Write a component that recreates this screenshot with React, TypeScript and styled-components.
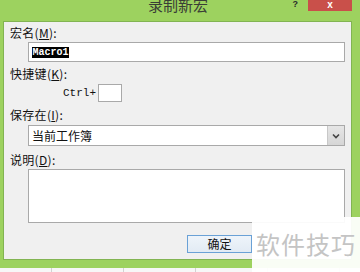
import React from "react";
import styled, { createGlobalStyle } from "styled-components";

const Global = createGlobalStyle`
  html, body { margin: 0; padding: 0; background: #f5f5f5; }
  body { font-family: "Noto Sans CJK SC", "Noto Sans", sans-serif; }
  * { box-sizing: border-box; }
`;

const Screen = styled.div`
  position: relative;
  width: 360px;
  height: 272px;
  overflow: hidden;
  display: flex;
  flex-direction: column;
`;

const Window = styled.div`
  height: 268px;
  background: #9dd25f;
  display: flex;
  flex-direction: column;
  padding: 0 8px 8px 3px;
`;

const TitleBar = styled.div`
  height: 21px;
  display: flex;
  align-items: flex-start;
  margin-right: -8px;
`;

const TitleText = styled.div`
  margin-left: 145px;
  margin-top: -3px;
  font-family: "Noto Sans CJK SC", sans-serif;
  font-size: 15px;
  line-height: 16px;
  color: #3a3d36;
`;

const Spacer = styled.div`
  flex: 1;
`;

const Help = styled.div`
  margin-top: 0px;
  margin-right: 10px;
  font-family: "Liberation Sans", sans-serif;
  font-weight: bold;
  font-size: 9px;
  line-height: 9px;
  color: #2b2b2b;
`;

const Close = styled.div`
  width: 44px;
  height: 11px;
  margin-right: 8px;
  background: #c9504a;
  color: #fff;
  display: flex;
  justify-content: center;
  align-items: flex-start;
  font-family: "Liberation Sans", sans-serif;
  font-weight: bold;
  font-size: 10px;
  line-height: 9px;
`;

const Panel = styled.div`
  flex: 1;
  background: #f0f0f0;
  border: 1px solid #82b452;
  display: flex;
  flex-direction: column;
  padding: 4px 6px 0 6px;
`;

const Label = styled.div`
  font-size: 12px;
  line-height: 14px;
  color: #111;
  white-space: nowrap;
  letter-spacing: 0.3px;
`;

const Field = styled.div<{ $h: number; $mt: number }>`
  margin-left: 18px;
  margin-top: ${(p) => p.$mt}px;
  height: ${(p) => p.$h}px;
  background: #fff;
  border: 1px solid #a9a9a9;
  display: flex;
  align-items: center;
  padding-left: 3px;
`;

const Selected = styled.span`
  background: #000;
  color: #fff;
  font-family: "Liberation Mono", monospace;
  font-size: 10px;
  line-height: 11px;
  padding: 0 0.5px;
  font-weight: bold;
`;

const Spaced = styled.div<{ $mt: number }>`
  margin-top: ${(p) => p.$mt}px;
`;

const ShortcutRow = styled.div`
  margin-top: 3px;
  margin-left: 53px;
  display: flex;
  align-items: center;
  gap: 2px;
  height: 18px;
`;

const Mono = styled.span`
  font-family: "Liberation Mono", monospace;
  font-size: 11px;
  color: #111;
`;

const KeyBox = styled.div`
  width: 24px;
  height: 18px;
  background: #fff;
  border: 1px solid #a9a9a9;
`;

const SelectText = styled.span`
  flex: 1;
  font-size: 12px;
  color: #111;
`;

const DropButton = styled.div`
  width: 17px;
  height: 100%;
  background: linear-gradient(#e6e6e6, #d6d6d6);
  border-left: 1px solid #c8c8c8;
  display: flex;
  align-items: center;
  justify-content: center;
`;

const ButtonRow = styled.div`
  margin-top: 12px;
  display: flex;
  padding-left: 177px;
`;

const Button = styled.div`
  width: 65px;
  height: 18px;
  border: 1px solid #6aa1d6;
  background: linear-gradient(#eef4fa, #e2ebf4);
  display: flex;
  align-items: center;
  justify-content: center;
  font-size: 12px;
  line-height: 14px;
  color: #111;
`;

const Sheet = styled.div`
  flex: 1;
  display: grid;
  grid-template-columns: 52px repeat(5, 72px);
  background: #f7f7f7;
`;

const Cell = styled.div`
  border-right: 1px solid #d2d2d2;
`;

const Watermark = styled.div`
  position: absolute;
  left: 252px;
  top: 217px;
  width: 108px;
  height: 55px;
  background: rgba(255, 255, 255, 0.94);
  display: flex;
  align-items: center;
  justify-content: center;
  font-family: "Noto Sans CJK SC", sans-serif;
  font-size: 24px;
  color: #c4c4c4;
  letter-spacing: 1px;
  padding-bottom: 2px;
`;

export default function App() {
  return (
    <>
      <Global />
      <Screen>
        <Window>
          <TitleBar>
            <TitleText>录制新宏</TitleText>
            <Spacer />
            <Help>?</Help>
            <Close>x</Close>
          </TitleBar>
          <Panel>
            <Label>宏名(<u>M</u>):</Label>
            <Field $h={20} $mt={2}>
              <Selected>Macro1</Selected>
            </Field>
            <Spaced $mt={5}>
              <Label>快捷键(<u>K</u>):</Label>
            </Spaced>
            <ShortcutRow>
              <Mono>Ctrl+</Mono>
              <KeyBox />
            </ShortcutRow>
            <Spaced $mt={6}>
              <Label>保存在(<u>I</u>):</Label>
            </Spaced>
            <Field $h={21} $mt={3}>
              <SelectText>当前工作簿</SelectText>
              <DropButton>
                <svg width="8" height="6" viewBox="0 0 8 6">
                  <path d="M1 1.5 L4 4.5 L7 1.5" fill="none" stroke="#444" strokeWidth="1.6" />
                </svg>
              </DropButton>
            </Field>
            <Spaced $mt={7}>
              <Label>说明(<u>D</u>):</Label>
            </Spaced>
            <Field $h={54} $mt={2} />
            <ButtonRow>
              <Button>确定</Button>
            </ButtonRow>
          </Panel>
        </Window>
        <Sheet>
          <Cell />
          <Cell />
          <Cell />
          <Cell />
          <Cell />
          <Cell />
        </Sheet>
        <Watermark>软件技巧</Watermark>
      </Screen>
    </>
  );
}
